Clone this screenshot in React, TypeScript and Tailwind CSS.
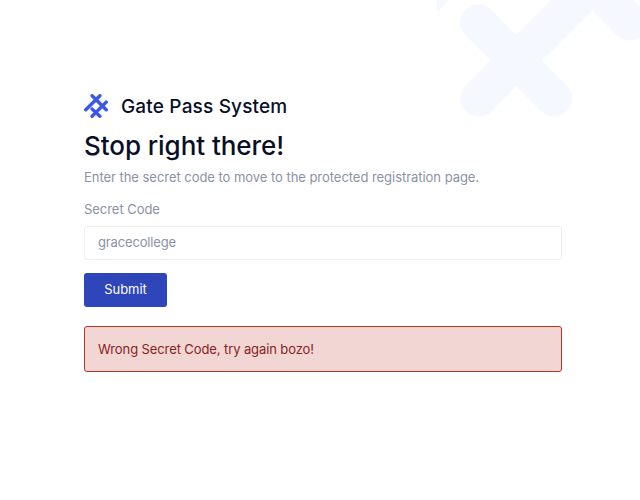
function Logo() {
  return (
    <svg
      className="size-6 shrink-0"
      viewBox="0 0 24 24"
      fill="none"
      stroke="#3a57e8"
      strokeWidth="3.4"
      strokeLinecap="round"
    >
      <path d="M1.8 15.8 15.9 1.8M8.1 1.8 22.2 15.8M22.2 8.1 8.1 22.2M8.1 15 15.9 22.2" />
    </svg>
  );
}

function CornerPattern() {
  return (
    <svg
      className="pointer-events-none absolute top-0 right-0"
      width="203"
      height="130"
      viewBox="437 0 203 130"
      fill="none"
    >
      <g stroke="#f5f8ff" strokeWidth="36.4" strokeLinecap="round">
        <path d="M478.5 22.6 554 98.4M478.5 98.4 608 -31.4M576 -31.6 630 22.4" />
      </g>
      <path d="M437 0h12.5L437 12.5z" fill="#f5f8ff" />
    </svg>
  );
}

export default function App() {
  return (
    <main className="relative h-[500px] w-[640px] overflow-hidden bg-white pt-[94px] pl-[84px] font-['Inter',sans-serif] text-[13px] tracking-[-0.04px] text-[#8a92a6]">
      <CornerPattern />
      <div className="relative w-[478px]">
        <div className="flex h-6 items-center gap-[13px]">
          <Logo />
          <h4 className="pt-px text-[19px] leading-6 font-medium tracking-[0.17px] whitespace-nowrap text-[#0a0f28]">
            Gate Pass System
          </h4>
        </div>
        <h2 className="mt-[11px] text-[26px] leading-[34px] font-medium tracking-[-0.06px] text-[#0a0f28]">
          Stop right there!
        </h2>
        <p className="mt-1 leading-5">
          Enter the secret code to move to the protected registration page.
        </p>
        <form onSubmit={(e) => e.preventDefault()}>
          <label htmlFor="code" className="mt-3 block leading-5">
            Secret Code
          </label>
          <input
            id="code"
            type="text"
            defaultValue="gracecollege"
            className="mt-[7px] block h-[34px] w-full rounded-[3px] border border-[#eeeeee] bg-white px-[13px] pb-[2px] tracking-[-0.15px] outline-none"
          />
          <button
            type="submit"
            className="mt-[13px] block h-[34px] w-[83px] rounded-[3px] bg-[#2e46ba] text-white"
          >
            Submit
          </button>
        </form>
        <div
          role="alert"
          className="mt-[19px] flex h-[46px] items-center rounded-[3px] border border-[#c03221] bg-[#f2d6d3] px-[13px] pt-[2px] tracking-[-0.1px] text-[#861f22]"
        >
          Wrong Secret Code, try again bozo!
        </div>
      </div>
    </main>
  );
}
